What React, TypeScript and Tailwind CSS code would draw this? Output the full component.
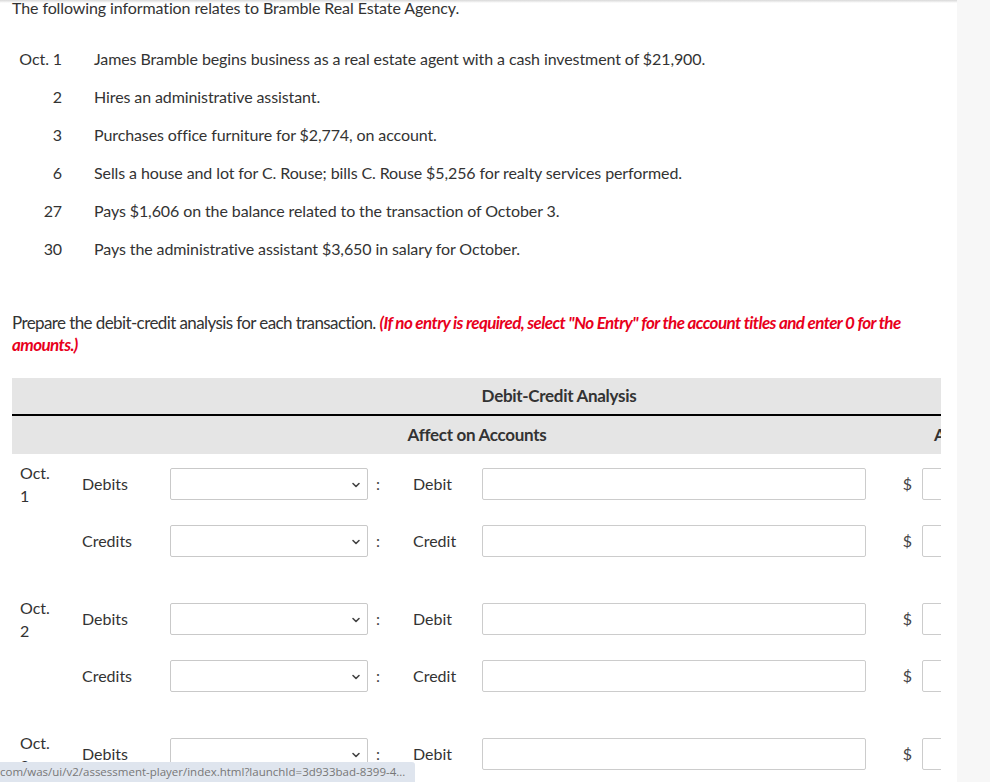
import React from 'react';
import { ChevronDown } from 'lucide-react';

const transactions = [
  { date: 'Oct. 1', text: 'James Bramble begins business as a real estate agent with a cash investment of $21,900.' },
  { date: '2', text: 'Hires an administrative assistant.' },
  { date: '3', text: 'Purchases office furniture for $2,774, on account.' },
  { date: '6', text: 'Sells a house and lot for C. Rouse; bills C. Rouse $5,256 for realty services performed.' },
  { date: '27', text: 'Pays $1,606 on the balance related to the transaction of October 3.' },
  { date: '30', text: 'Pays the administrative assistant $3,650 in salary for October.' },
];

const groups = [
  { day: '1', rows: ['Debits', 'Credits'] },
  { day: '2', rows: ['Debits', 'Credits'] },
  { day: '3', rows: ['Debits', 'Credits'] },
];

const EntryRow: React.FC<{ side: string }> = ({ side }) => {
  const single = side === 'Debits' ? 'Debit' : 'Credit';
  return (
    <div className="flex items-center h-[32px]">
      <div className="w-[88px]">{side}</div>
      <div className="relative w-[198px] h-[32px] border border-[#c9c9c9] rounded-[2px] bg-white">
        <ChevronDown className="absolute right-[5px] top-[10px] w-[12px] h-[12px] text-[#444]" strokeWidth={3.2} />
      </div>
      <div className="w-[45px] pl-[8px] text-[#444]">:</div>
      <div className="w-[69px]">{single}</div>
      <div className="w-[384px] h-[32px] border border-[#cccccc] rounded-[2px] bg-white" />
      <div className="w-[56px] pr-[10px] text-right text-[#444]">$</div>
      <div className="w-[60px] h-[32px] border border-[#cccccc] rounded-[2px] bg-white" />
    </div>
  );
};

export default function App() {
  return (
    <div className="relative flex w-[990px] h-[782px] overflow-hidden bg-white text-[#333] font-['Lato','Open_Sans',sans-serif] text-[16px]">
      <div className="w-[957px] shrink-0 bg-white">
        <div className="h-[3px] bg-gradient-to-b from-[#d8d8d8] to-white" />
        <div className="px-3 -mt-[6px] leading-[22px] tracking-[-0.1px]">The following information relates to Bramble Real Estate Agency.</div>

        {/* transactions */}
        <div className="mt-[21px] tracking-[-0.1px]">
          {transactions.map(t => (
            <div key={t.text} className="flex items-center h-[38px]">
              <div className="w-[62px] text-right">{t.date}</div>
              <div className="pl-[32px]">{t.text}</div>
            </div>
          ))}
        </div>

        {/* instructions */}
        <div className="mt-[44px] pl-3 w-[915px] leading-[22px] text-[17px] tracking-[-0.6px]">
          Prepare the debit-credit analysis for each transaction.{' '}
          <span className="italic font-bold text-[#e8001c]">
            (If no entry is required, select "No Entry" for the account titles and enter 0 for the amounts.)
          </span>
        </div>

        {/* table */}
        <div className="ml-3 mt-[22px] w-[929px] overflow-hidden">
          <div className="w-[1094px]">
            <div className="h-[38px] flex items-center justify-center bg-[#e5e5e5] border-b-2 border-black font-bold text-[17px] tracking-[-0.3px]">
              Debit-Credit Analysis
            </div>
            <div className="h-[38px] flex items-center bg-[#e5e5e5] font-bold text-[17px] tracking-[-0.3px]">
              <div className="w-[922px] pl-[8px] text-center">Affect on Accounts</div>
              <div>Amount</div>
            </div>
            {groups.map(g => (
              <div key={g.day} className="flex pt-[14px] pb-[32px]">
                <div className="w-[70px] pl-2 -mt-[7px] leading-[23px]">
                  <div>Oct.</div>
                  <div>{g.day}</div>
                </div>
                <div className="flex flex-col gap-[25px]">
                  {g.rows.map(r => (
                    <EntryRow key={r} side={r} />
                  ))}
                </div>
              </div>
            ))}
          </div>
        </div>
      </div>
      <div className="flex-1 bg-[#f7f7f7]" />

      {/* browser status bar */}
      <div className="absolute left-0 bottom-0 w-[415px] h-[20px] bg-[#dfe5ee] rounded-tr-[3px] flex items-center overflow-hidden whitespace-nowrap font-['Open_Sans',sans-serif] text-[11.5px] text-[#777] -indent-[3px]">
        .com/was/ui/v2/assessment-player/index.html?launchId=3d933bad-8399-4...
      </div>
    </div>
  );
}
